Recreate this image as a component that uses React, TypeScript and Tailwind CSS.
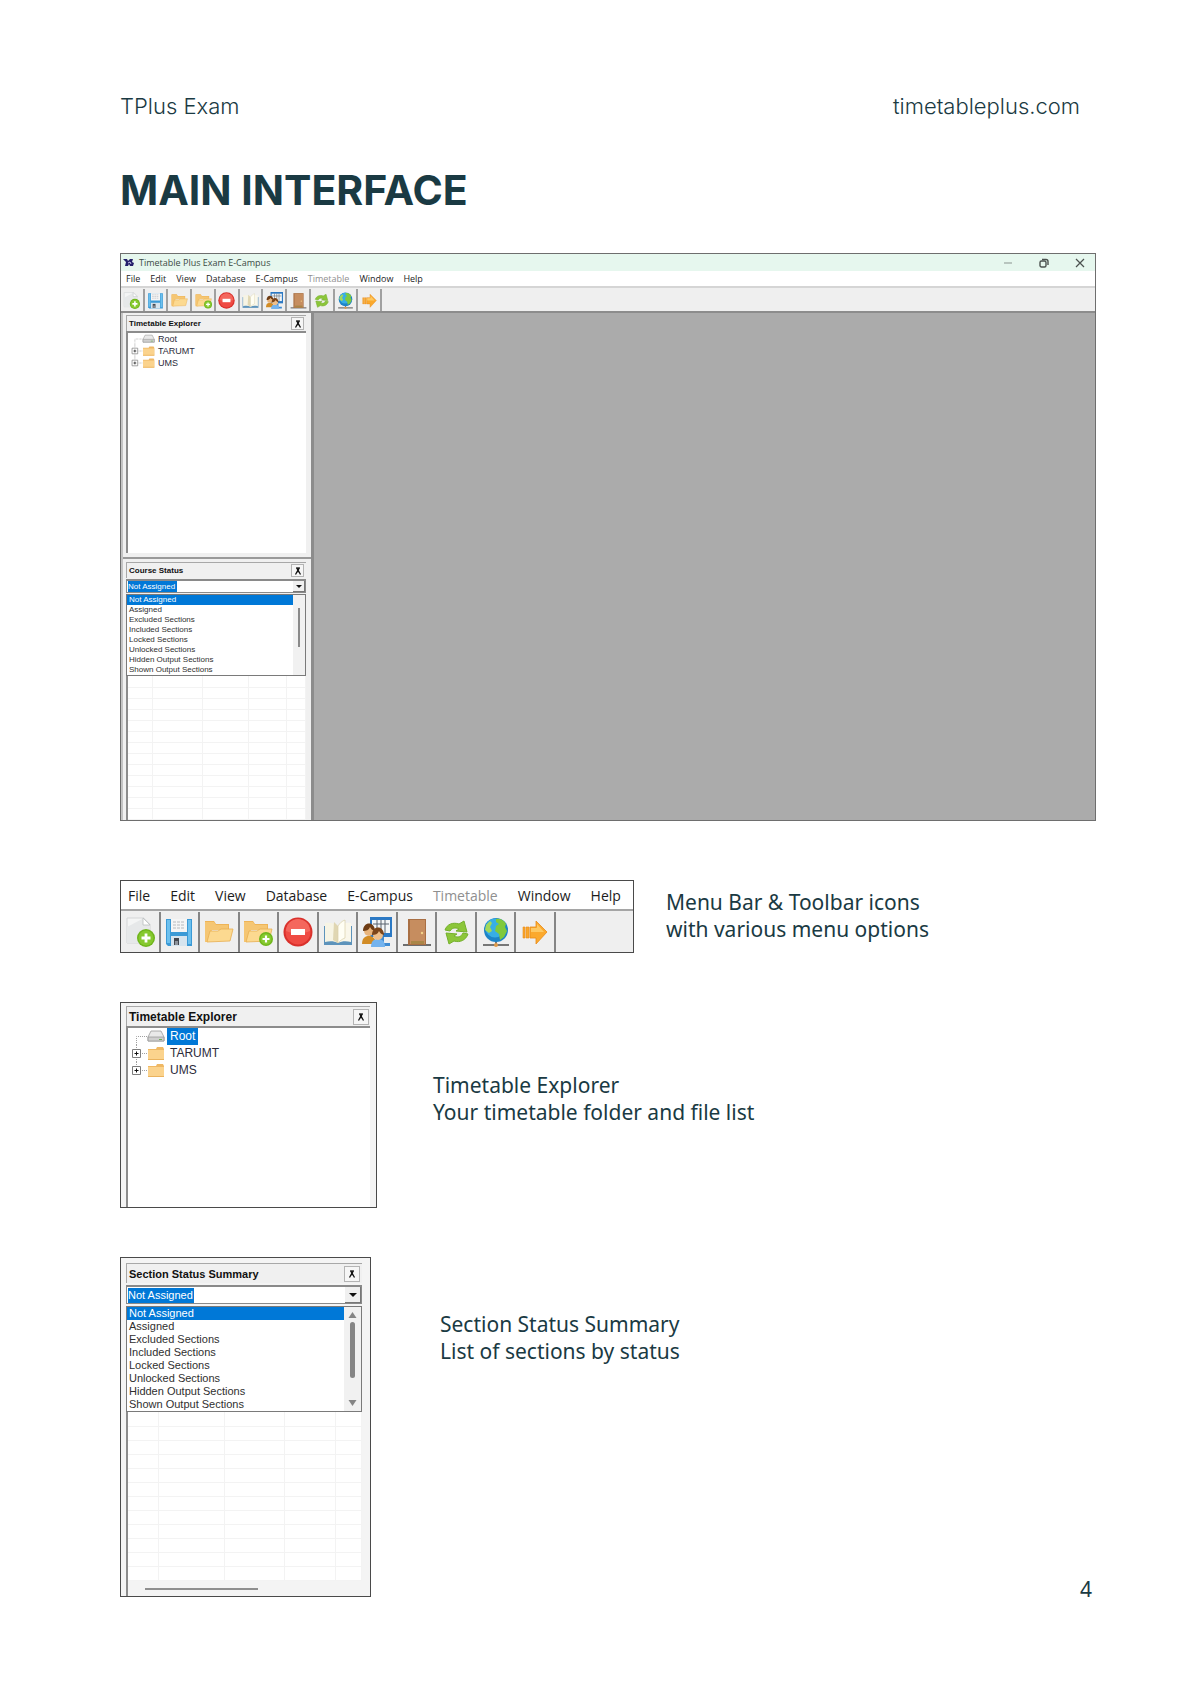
import type React from "react"
import { clsx } from "clsx"

const MENU = ["File", "Edit", "View", "Database", "E-Campus", "Timetable", "Window", "Help"]

const STATUSES = [
  "Not Assigned",
  "Assigned",
  "Excluded Sections",
  "Included Sections",
  "Locked Sections",
  "Unlocked Sections",
  "Hidden Output Sections",
  "Shown Output Sections",
]

const GreenPlus = ({ cx, cy, r }: { cx: number; cy: number; r: number }) => (
  <g>
    <circle cx={cx} cy={cy} r={r} fill="#6fb51c" />
    <circle cx={cx} cy={cy} r={r - 1.5} fill="#86c92f" />
    <path
      d={`M${cx - r / 2} ${cy}h${r}M${cx} ${cy - r / 2}v${r}`}
      stroke="#fff"
      strokeWidth={r / 3.2}
    />
  </g>
)

const OpenFolder = () => (
  <g>
    <path d="M1 4h9l2 3h13v5H5L1 25z" fill="#eeb457" />
    <path d="M1 5h9l2 3h12v5H8l-3 12H1z" fill="#f5c673" />
    <path d="M3 25 6 14h8l3-2h12l-3 12z" fill="#fcd990" stroke="#e9ae50" strokeWidth=".8" />
  </g>
)

const TOOLS: { label: string; art: React.ReactNode }[] = [
  {
    label: "New",
    art: (
      <g>
        <path d="M2 1h17l6 6v19H2z" fill="#f4f5f5" stroke="#d3d5d6" />
        <path d="M2 10 19 1l6 6v19H2z" fill="#e6e8e9" />
        <path d="M18 1v7h7z" fill="#fff" stroke="#b9bcbe" strokeWidth=".8" />
        <GreenPlus cx={21} cy={21} r={9} />
      </g>
    ),
  },
  {
    label: "Save",
    art: (
      <g>
        <path d="M2 2h26v27H4l-2-2z" fill="#3b9ad6" />
        <path d="M3 3h3v23H3zM24 3h3v24h-3z" fill="#6cc0ee" />
        <path d="M7 2h16v13H7z" fill="#f5f5f5" />
        <path d="M9 5h12M9 8h12M9 11h12" stroke="#b7babd" strokeDasharray="3 1" />
        <path d="M7 19h16v10H7z" fill="#d6e4ee" />
        <path d="M10 21h5v7h-5z" fill="#45484f" />
        <path d="M11 24h3v4h-3z" fill="#8e939b" />
      </g>
    ),
  },
  { label: "Open", art: <OpenFolder /> },
  {
    label: "Add folder",
    art: (
      <g>
        <OpenFolder />
        <GreenPlus cx={23} cy={22} r={7} />
      </g>
    ),
  },
  {
    label: "Remove",
    art: (
      <g>
        <circle cx="15" cy="15" r="14.5" fill="#d9312c" />
        <circle cx="15" cy="15" r="12.5" fill="#ef4b43" />
        <path d="M3 14a12 12 0 0 1 24 0c-7 3-17 3-24 0z" fill="#f4675d" />
        <path d="M8 12h14v6H8z" fill="#fff" />
      </g>
    ),
  },
  {
    label: "Book",
    art: (
      <g>
        <path d="M1 9h28v19H1z" fill="#5d93bb" />
        <path d="M2 6c5-1 9 0 13 3v17c-4-2-8-2-13-1z" fill="#f7f4e4" />
        <path d="M28 6c-5-1-9 0-13 3v17c4-2 8-2 13-1z" fill="#faf7ea" />
        <path d="M11 5 15 9v17l-5-3z" fill="#e0d6b2" />
        <path d="M15 9c2-3 4-5 7-6v18c-3 1-5 3-7 5z" fill="#fffef4" stroke="#d9cfa9" strokeWidth=".7" />
      </g>
    ),
  },
  {
    label: "Class",
    art: (
      <g>
        <path d="M8 0h22v20H8z" fill="#2c79c4" />
        <path d="M10 3h18v13H10z" fill="#f3f6f8" />
        <path d="M11 7h16M15 3v13M19 3v13M23 3v13" stroke="#59636e" />
        <path d="M17 20h5v6h6v3H15z" fill="#3f8bd2" />
        <path d="M0 27c0-7 4-8 7-8s7 2 7 8z" fill="#d28c25" />
        <circle cx="7" cy="14" r="5" fill="#e9b57d" />
        <path d="M1 14c0-10 12-10 12 0-3-1-4-2-5-4-1 3-4 4-7 4z" fill="#6e3c14" />
        <path d="M9 30c0-6 3-8 7-8s7 2 7 8z" fill="#74b3ee" />
        <circle cx="16" cy="18" r="5" fill="#efbf8b" />
        <path d="M10 18c0-10 12-10 12 0-3-1-4-2-5-4-1 3-4 4-7 4z" fill="#7c451a" />
      </g>
    ),
  },
  {
    label: "Room",
    art: (
      <g>
        <path d="M1 28h28" stroke="#6e6e6e" strokeWidth="2" />
        <path d="M6 2h18v26H6z" fill="#a96f44" />
        <path d="M8 3h15v24H8z" fill="#c68d5f" />
        <path d="M9 24h13v3H9z" fill="#a98647" />
        <circle cx="20" cy="16" r="1.2" fill="#f4d38a" />
      </g>
    ),
  },
  {
    label: "Refresh",
    art: (
      <g strokeLinejoin="round">
        <path d="M4 13c2-6 8-8 14-6l5-3 3 11-11-1 3-2c-4-2-7-1-9 2z" fill="#8cc63a" stroke="#74b02c" />
        <path d="M27 17c-2 6-8 9-14 7l-5 3-3-11 11 1-3 2c4 2 7 1 9-3z" fill="#8cc63a" stroke="#74b02c" />
      </g>
    ),
  },
  {
    label: "Network",
    art: (
      <g>
        <path d="M2 28h26M15 24v4" stroke="#777" strokeWidth="2" />
        <circle cx="15" cy="28" r="2" fill="#e09a4a" />
        <circle cx="15" cy="13" r="12" fill="#1d84c8" />
        <circle cx="14" cy="11" r="9.5" fill="#37aee6" />
        <path d="M15 2c4-1 8 1 10 5l-1 3 2 4-3 6-4 3-1-6-4-3 1-5 3-2-3-2z" fill="#7fc93c" />
        <path d="M5 8l4-4 2 2-2 4 2 4-3 2-4-3z" fill="#a3d85a" />
      </g>
    ),
  },
  {
    label: "Go",
    art: (
      <g>
        <path d="M3 10h2v11H3zM6 10h3v11H6z" fill="#f9a72b" stroke="#e98a17" strokeWidth=".6" />
        <path d="M10 10h6V4l11 11-11 12v-6h-6z" fill="#fba92d" stroke="#e98a17" strokeWidth=".8" />
        <path d="M11 11h6V7l7 8H11z" fill="#fdc964" />
      </g>
    ),
  },
]

const MenuBar: React.FC<{ small?: boolean }> = ({ small }) => (
  <nav
    className={clsx(
      "flex items-center bg-white font-['Open_Sans',sans-serif] text-[#1c1c1c]",
      small ? "h-[15px] gap-[10px] pl-[5px] text-[9px] leading-[15px]" : "h-[26px] gap-5 pl-[7px] text-[14px] leading-5",
    )}
  >
    {MENU.map((m) => (
      <button key={m} type="button" className={m === "Timetable" ? "text-[#8f8f8f]" : undefined}>
        {m}
      </button>
    ))}
  </nav>
)

const ToolBar: React.FC<{ small?: boolean }> = ({ small }) => (
  <div
    className={clsx(
      "border-t-2 bg-[#efefef] pt-px",
      small ? "h-[25px] border-[#d5d5d5]" : "h-[43px] border-[#a5a5a5]",
    )}
  >
    <div className={clsx("flex h-full", small ? "w-[261px]" : "w-[435px]")}>
      {TOOLS.map((t) => (
        <button
          key={t.label}
          type="button"
          aria-label={t.label}
          className={clsx(
            "flex flex-1 items-center justify-center border-r-2",
            small ? "border-[#a0a0a0]" : "border-[#858585]",
          )}
        >
          <svg viewBox="0 0 30 30" className={small ? "size-[17px]" : "size-[30px]"}>
            {t.art}
          </svg>
        </button>
      ))}
    </div>
  </div>
)

const PanelHeader: React.FC<{ title: string; className: string; pin: string }> = ({ title, className, pin }) => (
  <div
    className={clsx(
      "flex items-center justify-between border-t border-l border-[#a8a8a8] bg-[#f0f0f0] pl-[2px] font-bold text-[#111]",
      className,
    )}
  >
    <h2>{title}</h2>
    <button
      type="button"
      aria-label="Pin panel"
      className={clsx("flex items-center justify-center border border-[#b4b4b4] bg-[#f6f6f6]", pin)}
    >
      <svg viewBox="0 0 8 8" className="size-[8px]" fill="none" stroke="#111">
        <path d="M2 1h4" strokeWidth="1.2" />
        <path d="M3 1 4 4 5 1M4 3 1.5 7.5M4 3 6.5 7.5" strokeWidth="1.3" />
      </svg>
    </button>
  </div>
)

const Tree: React.FC<{ small?: boolean }> = ({ small }) => (
  <ul className={clsx("text-[#2b2b3a]", small ? "text-[9px] leading-3" : "text-[12px] leading-[17px]")}>
    {["Root", "TARUMT", "UMS"].map((name, i) => (
      <li key={name} className={clsx("flex items-center pl-[3px]", small ? "h-3" : "h-[17px]")}>
        <svg
          viewBox="0 0 34 17"
          className={clsx("shrink-0", small ? "h-3 w-6" : "h-[17px] w-[34px]")}
        >
          <path
            d={i === 0 ? "M5.5 17V8.5H16" : i === 1 ? "M5.5 0V17M5 8.5H16" : "M5.5 0V8.5H16"}
            fill="none"
            stroke="#a0a0a0"
            strokeDasharray="1 1"
          />
          {i > 0 && (
            <g>
              <path d="M1.5 4.5h8v8h-8z" fill="#fff" stroke="#7d7d7d" />
              <path d="M3.5 8.5h4M5.5 6.5v4" stroke="#111" />
            </g>
          )}
          {i === 0 ? (
            <g>
              <path d="M20 3h10l3 6v4H17V9z" fill="#e9e9e9" stroke="#9b9b9b" strokeWidth=".8" />
              <path d="M17 9h16v4H17z" fill="#cfcfcf" stroke="#9b9b9b" strokeWidth=".8" />
              <path d="M28 11.5h3" stroke="#6fae55" />
            </g>
          ) : (
            <g>
              <path d="M17 4h8l1-2h6l1 2v11H17z" fill="#efb864" />
              <path d="M17 5h16v10H17z" fill="#fbd38d" />
              <path d="M17 14.5h16" stroke="#eab35e" />
            </g>
          )}
        </svg>
        <span
          className={clsx(
            "ml-[2px]",
            small ? "px-px" : "px-[3px]",
            !small && i === 0 && "bg-[#0078d7] text-white",
          )}
        >
          {name}
        </span>
      </li>
    ))}
  </ul>
)

const StatusPicker: React.FC<{ label: string; small?: boolean }> = ({ label, small }) => (
  <div
    className={clsx(
      "text-[#2f2f2f]",
      small ? "w-[180px] text-[8px] leading-[10px]" : "w-[236px] text-[11px] leading-[13px]",
    )}
  >
    <div
      className={clsx(
        "flex items-center justify-between border border-t-2 border-[#8a8a8a] bg-white pl-px",
        small ? "mb-px h-[14px]" : "mb-[2px] h-[19px]",
      )}
    >
      <select
        aria-label={label}
        defaultValue="Not Assigned"
        className={clsx(
          "appearance-none bg-[#0078d7] text-white",
          small ? "h-[11px] w-[49px] leading-[11px]" : "h-[15px] w-[66px] leading-[15px]",
        )}
      >
        {STATUSES.map((s) => (
          <option key={s}>{s}</option>
        ))}
      </select>
      <button
        type="button"
        aria-label="Show statuses"
        className={clsx(
          "flex h-full items-center justify-center border-r border-b border-[#777] bg-[#f0f0f0]",
          small ? "w-3" : "w-4",
        )}
      >
        <svg viewBox="0 0 8 4" className={small ? "h-[3px] w-[6px]" : "h-[4px] w-[8px]"}>
          <path d="M0 0h8L4 4z" fill="#111" />
        </svg>
      </button>
    </div>
    <div className="flex border border-[#7a7a7a] bg-white">
      <ul role="listbox" aria-label="Statuses" className="flex-1">
        {STATUSES.map((s, i) => (
          <li
            key={s}
            role="option"
            aria-selected={i === 0}
            className={clsx("pl-[2px]", i === 0 && "bg-[#0078d7] text-white")}
          >
            {s}
          </li>
        ))}
      </ul>
      {small ? (
        <div className="flex w-3 justify-center bg-[#f1f1f1] pt-[13px]">
          <span className="h-[39px] w-[2px] bg-[#8a8a8a]" />
        </div>
      ) : (
        <div className="flex w-[17px] flex-col items-center justify-between bg-[#f1f1f1] py-[5px]">
          <svg viewBox="0 0 8 6" className="h-[6px] w-[9px]">
            <path d="M4 0 8 6H0z" fill="#858585" />
          </svg>
          <span className="mt-1 mb-auto h-[56px] w-[5px] rounded-full bg-[#858585]" />
          <svg viewBox="0 0 8 6" className="h-[6px] w-[9px]">
            <path d="M4 6 8 0H0z" fill="#858585" />
          </svg>
        </div>
      )}
    </div>
  </div>
)

const EmptyGrid: React.FC<{ rows: number; cols: string[]; rowClass: string; className: string }> = ({
  rows,
  cols,
  rowClass,
  className,
}) => (
  <table className={clsx("table-fixed border-collapse bg-white", className)}>
    <tbody>
      {Array.from({ length: rows }, (_, r) => (
        <tr key={r} className={rowClass}>
          {cols.map((c) => (
            <td key={c} className={clsx("border-r border-b border-[#f3f3f3] p-0", c)} />
          ))}
        </tr>
      ))}
    </tbody>
  </table>
)

const AppWindow = () => (
  <div className="border border-[#6e6e6e] bg-[#f0f0f0]">
    <div className="flex h-[17px] items-center bg-[#e6f7ee] pl-[2px] font-['Open_Sans',sans-serif] text-[9px] leading-[17px] text-[#3b4a44]">
      <svg viewBox="0 0 11 9" className="mr-[5px] h-[9px] w-[11px]">
        <path d="M0 1 4 1 5 3 7 1 10 1 9 4 11 5 10 8 7 8 6 6 5 8 2 8 3 4z" fill="#24206b" />
        <path d="M5 5 7 4 8 6" stroke="#c9c4ee" fill="none" />
      </svg>
      <span>Timetable Plus Exam E-Campus</span>
      <div className="ml-auto flex items-center gap-[26px] pr-[10px]">
        <button type="button" aria-label="Minimize">
          <svg viewBox="0 0 10 10" className="size-[10px]">
            <path d="M1 5h8" stroke="#8a938f" />
          </svg>
        </button>
        <button type="button" aria-label="Restore">
          <svg viewBox="0 0 10 10" className="size-[10px]" fill="none" stroke="#4b524f" strokeWidth="1.4">
            <rect x="1" y="3" width="6" height="6" rx="1.5" />
            <path d="M3 1.5h4a2 2 0 0 1 2 2V7" />
          </svg>
        </button>
        <button type="button" aria-label="Close">
          <svg viewBox="0 0 10 10" className="size-[10px]" stroke="#4b524f" strokeWidth="1.2">
            <path d="M1 1 9 9M9 1 1 9" />
          </svg>
        </button>
      </div>
    </div>
    <MenuBar small />
    <ToolBar small />
    <div className="flex min-h-[509px] border-t-2 border-[#8c8c8c]">
      <div className="flex w-[193px] shrink-0 flex-col border-r-[3px] border-l-2 border-[#8c8c8c] border-l-[#c4c4c4] font-['Liberation_Sans',Arial,sans-serif]">
        <div className="flex h-[246px] flex-col border-b-2 border-[#9a9a9a] pt-[2px] pr-[5px] pb-1 pl-[3px]">
          <PanelHeader title="Timetable Explorer" className="h-4 pr-[2px] text-[8px] leading-3" pin="h-[13px] w-[13px]" />
          <div className="flex-1 border-t-2 border-l-2 border-[#8c8c8c] bg-white">
            <Tree small />
          </div>
        </div>
        <div className="flex flex-1 flex-col pt-[3px] pl-[3px]">
          <div className="mb-px w-[180px]">
            <PanelHeader title="Course Status" className="h-4 pr-[2px] text-[8px] leading-3" pin="h-[13px] w-[13px]" />
          </div>
          <StatusPicker label="Course status" small />
          <div className="w-[180px] flex-1 border-l-2 border-[#8c8c8c] bg-white">
            <EmptyGrid
              rows={13}
              cols={["w-[24px]", "w-[50px]", "w-[46px]", "w-[38px]", "w-[19px]"]}
              rowClass="h-[11px]"
              className="w-[177px]"
            />
          </div>
        </div>
      </div>
      <div className="flex-1 bg-[#ababab]" />
    </div>
  </div>
)

export default function App() {
  return (
    <div className="min-h-screen bg-white pt-[93px] pr-[104px] pb-[86px] pl-[120px] font-['Noto_Sans',sans-serif] text-[21px] leading-[27px] text-[#1a3a43]">
      <header className="flex justify-between pr-4 font-['Inter',sans-serif] text-[22px] font-light">
        <span>TPlus Exam</span>
        <a href="#top">timetableplus.com</a>
      </header>
      <h1 className="mt-[46px] font-['Inter',sans-serif] text-[41px] leading-[48px] font-bold">MAIN INTERFACE</h1>

      <div className="mt-[39px]">
        <AppWindow />
      </div>

      <section className="mt-[59px] flex gap-8">
        <div className="w-[514px] shrink-0 border border-[#4a4a4a] pt-[2px]">
          <MenuBar />
          <ToolBar />
        </div>
        <p className="pt-[9px]">
          Menu Bar &amp; Toolbar icons
          <br />
          with various menu options
        </p>
      </section>

      <section className="mt-[49px] flex items-center gap-14">
        <div className="flex h-[206px] w-[257px] shrink-0 flex-col border border-[#4a4a4a] bg-[#f4f4f4] pt-[3px] pr-[6px] pl-[5px] font-['Liberation_Sans',Arial,sans-serif]">
          <PanelHeader title="Timetable Explorer" className="h-5 pr-px text-[12px] leading-4" pin="h-[16px] w-[16px]" />
          <div className="flex-1 border-t-2 border-l-2 border-[#8c8c8c] bg-white">
            <Tree />
          </div>
        </div>
        <p className="pb-3">
          Timetable Explorer
          <br />
          Your timetable folder and file list
        </p>
      </section>

      <section className="mt-[49px] flex gap-[69px]">
        <div className="flex h-[340px] w-[251px] shrink-0 flex-col border border-[#4a4a4a] bg-[#f4f4f4] pt-[5px] pl-[5px] font-['Liberation_Sans',Arial,sans-serif]">
          <div className="mb-[2px] w-[236px]">
            <PanelHeader title="Section Status Summary" className="h-5 pr-[2px] text-[11px] leading-4" pin="h-[16px] w-[16px]" />
          </div>
          <StatusPicker label="Section status" />
          <div className="w-[236px] flex-1 border-l-2 border-[#8c8c8c]">
            <EmptyGrid
              rows={12}
              cols={["w-[30px]", "w-[66px]", "w-[60px]", "w-[51px]", "w-[26px]"]}
              rowClass="h-[14px]"
              className="w-[233px]"
            />
            <div className="pt-[7px] pl-[17px]">
              <div className="h-[2px] w-[113px] bg-[#8f8f8f]" />
            </div>
          </div>
        </div>
        <p className="pt-[54px]">
          Section Status Summary
          <br />
          List of sections by status
        </p>
      </section>

      <footer className="-mt-[21px] pr-1 text-right">4</footer>
    </div>
  )
}
